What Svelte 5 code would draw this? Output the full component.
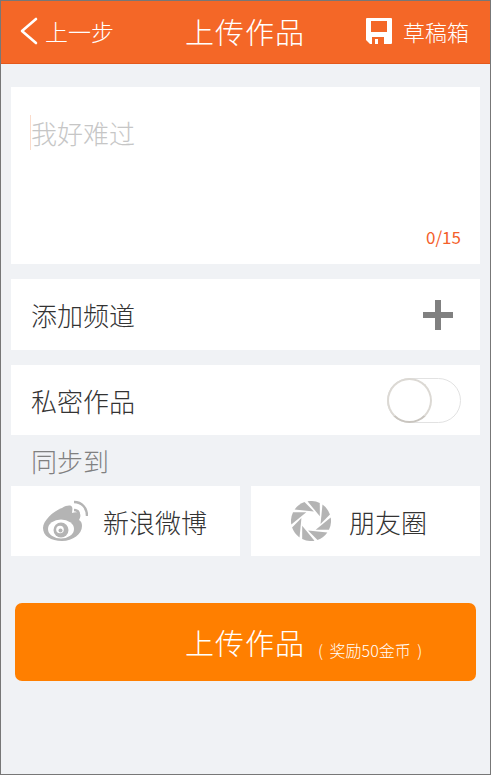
<script>
	let title = '';
	const maxLen = 15;

	// shutter blades for the moments icon
	const pt = (r, deg) => {
		const a = (deg * Math.PI) / 180;
		return `${(20 + r * Math.cos(a)).toFixed(2)} ${(20 + r * Math.sin(a)).toFixed(2)}`;
	};
	const blades = Array.from({ length: 8 }, (_, i) => {
		const a = i * 45 - 100;
		return `M${pt(20, a)}A20 20 0 0 1 ${pt(20, a + 36)}L${pt(10, a + 72)}Z`;
	});
</script>

<div class="screen">
	<header class="topbar">
		<div class="back">
			<svg viewBox="0 0 18 28" width="18" height="28" fill="none" stroke="#fff" stroke-width="2.600" stroke-linecap="round" stroke-linejoin="round">
				<polyline points="16 2 2 14 16 26" />
			</svg>
			<span>上一步</span>
		</div>
		<div class="title">上传作品</div>
		<div class="drafts">
			<svg viewBox="0 0 26 26" width="26" height="26">
				<path fill="#fff" fill-rule="evenodd" d="M1 0h24a1 1 0 0 1 1 1v24a1 1 0 0 1-1 1H4l-4-4V1a1 1 0 0 1 1-1zM5 3v11h16V3zM6 19v7h3v-5h3v5h6v-7z" />
			</svg>
			<span>草稿箱</span>
		</div>
	</header>

	<main class="content">
		<section class="card editor">
			<div class="input">
				<span class="caret"></span>
				<span class="placeholder">{title || '我好难过'}</span>
			</div>
			<div class="count">{title.length}/{maxLen}</div>
		</section>

		<section class="card row channel">
			<span>添加频道</span>
			<svg viewBox="0 0 30 30" width="30" height="30" fill="#808080">
				<rect x="0" y="12" width="30" height="6" />
				<rect x="12" y="0" width="6" height="30" />
			</svg>
		</section>

		<section class="card row private">
			<span>私密作品</span>
			<div class="switch"><div class="knob"></div></div>
		</section>

		<div class="sync-label">同步到</div>

		<div class="share">
			<div class="card share-item">
				<svg class="weibo" viewBox="0 0 46 42" width="46" height="42">
					<path fill="#b4b4b4" d="M20 8c5-3 9-3 10-1 1 2 0 4 0 6 3-1 7-1 8 1 1 2 0 4-1 6 2 1 3 3 3 6 0 8-9 15-20 15S1 36 1 28c0-7 10-17 19-20z" />
					<ellipse cx="19" cy="29" rx="13" ry="9.500" fill="#fff" />
					<circle cx="19" cy="30" r="7.500" fill="#b4b4b4" />
					<circle cx="18" cy="29.500" r="3.800" fill="#fff" />
					<circle cx="18.500" cy="30.500" r="2" fill="#b4b4b4" />
					<path fill="none" stroke="#b4b4b4" stroke-width="2.400" d="M32 10c3 0 5 2 5 5" />
					<path fill="none" stroke="#b4b4b4" stroke-width="2.400" d="M32 2c8 0 13 6 13 14" />
				</svg>
				<span>新浪微博</span>
			</div>
			<div class="card share-item moments">
				<svg viewBox="0 0 40 40" width="40" height="40" fill="#b4b4b4">
					{#each blades as d}
						<path {d} />
					{/each}
				</svg>
				<span>朋友圈</span>
			</div>
		</div>

		<button class="submit">
			<span class="submit-text">上传作品</span>
			<span class="reward">( 奖励50金币 )</span>
		</button>
	</main>
</div>

<style>
	:global(body) {
		background: #f0f2f5;
	}

	.screen {
		box-sizing: border-box;
		height: 775px;
		border: 1px solid #777;
		background: #f0f2f5;
		font-family: 'Noto Sans CJK SC', 'Liberation Sans', sans-serif;
		overflow: hidden;
	}

	.topbar {
		height: 63px;
		box-sizing: border-box;
		background: #f46727;
		border-bottom: 1px solid #e4591c;
		color: #fff;
		display: flex;
		align-items: center;
		justify-content: space-between;
		padding: 0 21px 2px 19px;
	}

	.back,
	.drafts {
		display: flex;
		align-items: center;
		font-weight: 300;
	}

	.back {
		gap: 7px;
		width: 122px;
		font-size: 23px;
	}

	.drafts {
		gap: 11px;
		font-size: 22px;
	}

	.title {
		font-size: 29px;
		font-weight: 300;
		letter-spacing: 1px;
		margin-left: -18px;
	}

	.content {
		display: flex;
		flex-direction: column;
		padding: 23px 10px 0;
	}

	.card {
		background: #fff;
	}

	.editor {
		height: 177px;
		box-sizing: border-box;
		padding: 28px 19px 0;
		display: flex;
		flex-direction: column;
		justify-content: space-between;
		margin-bottom: 15px;
	}

	.input {
		display: flex;
		align-items: center;
		height: 35px;
	}

	.caret {
		width: 1px;
		height: 35px;
		background: #fbdccb;
	}

	.placeholder {
		color: #c6c6c6;
		font-size: 26px;
		font-weight: 300;
		line-height: 35px;
	}

	.count {
		color: #f4602a;
		font-size: 17px;
		text-align: right;
		line-height: 20px;
		margin-bottom: 17px;
	}

	.row {
		display: flex;
		align-items: center;
		justify-content: space-between;
		font-size: 26px;
		font-weight: 300;
		color: #333;
	}

	.channel {
		height: 71px;
		padding: 0 27px 0 20px;
		margin-bottom: 15px;
	}

	.private {
		height: 70px;
		padding: 0 19px 0 20px;
	}

	.switch {
		box-sizing: border-box;
		width: 74px;
		height: 45px;
		border: 1px solid #e2e2e2;
		border-radius: 23px;
		position: relative;
	}

	.knob {
		position: absolute;
		top: -1px;
		left: -1px;
		box-sizing: border-box;
		width: 45px;
		height: 45px;
		border: 2px solid #dcd9d4;
		border-bottom-color: #c9c5bf;
		border-radius: 50%;
		background: #fff;
	}

	.sync-label {
		height: 51px;
		box-sizing: border-box;
		padding: 9px 0 0 20px;
		font-size: 26px;
		line-height: 34px;
		font-weight: 300;
		color: #808080;
	}

	.share {
		display: grid;
		grid-template-columns: 229px 229px;
		gap: 11px;
	}

	.share-item {
		height: 70px;
		display: flex;
		align-items: center;
		gap: 15px;
		padding-left: 31px;
		font-size: 26px;
		font-weight: 300;
		color: #333;
	}

	.moments {
		padding-left: 40px;
		gap: 18px;
	}

	.submit {
		margin: 47px 4px 0;
		height: 78px;
		border: none;
		border-radius: 7px;
		background: #ff7f00;
		color: #fff;
		font-family: inherit;
		font-weight: 300;
		display: flex;
		align-items: center;
		padding: 0 0 0 170px;
	}

	.submit-text {
		font-size: 29px;
		letter-spacing: 1px;
	}

	.reward {
		font-size: 16px;
		margin-top: 16px;
		margin-left: 13px;
		white-space: pre;
		word-spacing: 3px;
	}
</style>
